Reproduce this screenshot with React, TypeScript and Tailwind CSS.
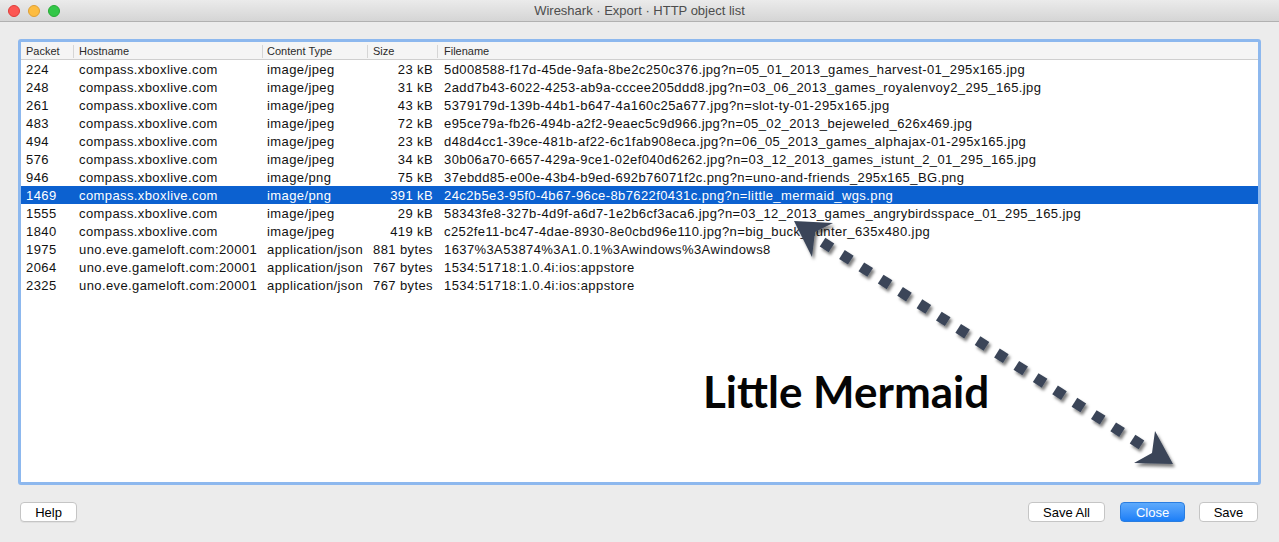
import React from "react";

const rows: [string, string, string, string, string][] = [
  ["224", "compass.xboxlive.com", "image/jpeg", "23 kB", "5d008588-f17d-45de-9afa-8be2c250c376.jpg?n=05_01_2013_games_harvest-01_295x165.jpg"],
  ["248", "compass.xboxlive.com", "image/jpeg", "31 kB", "2add7b43-6022-4253-ab9a-cccee205ddd8.jpg?n=03_06_2013_games_royalenvoy2_295_165.jpg"],
  ["261", "compass.xboxlive.com", "image/jpeg", "43 kB", "5379179d-139b-44b1-b647-4a160c25a677.jpg?n=slot-ty-01-295x165.jpg"],
  ["483", "compass.xboxlive.com", "image/jpeg", "72 kB", "e95ce79a-fb26-494b-a2f2-9eaec5c9d966.jpg?n=05_02_2013_bejeweled_626x469.jpg"],
  ["494", "compass.xboxlive.com", "image/jpeg", "23 kB", "d48d4cc1-39ce-481b-af22-6c1fab908eca.jpg?n=06_05_2013_games_alphajax-01-295x165.jpg"],
  ["576", "compass.xboxlive.com", "image/jpeg", "34 kB", "30b06a70-6657-429a-9ce1-02ef040d6262.jpg?n=03_12_2013_games_istunt_2_01_295_165.jpg"],
  ["946", "compass.xboxlive.com", "image/png", "75 kB", "37ebdd85-e00e-43b4-b9ed-692b76071f2c.png?n=uno-and-friends_295x165_BG.png"],
  ["1469", "compass.xboxlive.com", "image/png", "391 kB", "24c2b5e3-95f0-4b67-96ce-8b7622f0431c.png?n=little_mermaid_wgs.png"],
  ["1555", "compass.xboxlive.com", "image/jpeg", "29 kB", "58343fe8-327b-4d9f-a6d7-1e2b6cf3aca6.jpg?n=03_12_2013_games_angrybirdsspace_01_295_165.jpg"],
  ["1840", "compass.xboxlive.com", "image/jpeg", "419 kB", "c252fe11-bc47-4dae-8930-8e0cbd96e110.jpg?n=big_buck_hunter_635x480.jpg"],
  ["1975", "uno.eve.gameloft.com:20001", "application/json", "881 bytes", "1637%3A53874%3A1.0.1%3Awindows%3Awindows8"],
  ["2064", "uno.eve.gameloft.com:20001", "application/json", "767 bytes", "1534:51718:1.0.4i:ios:appstore"],
  ["2325", "uno.eve.gameloft.com:20001", "application/json", "767 bytes", "1534:51718:1.0.4i:ios:appstore"],
];

function Arrow() {
  const dots = [];
  const n = 17;
  const x0 = 827, y0 = 245, x1 = 1137, y1 = 442;
  const ang = (Math.atan2(y1 - y0, x1 - x0) * 180) / Math.PI;
  for (let i = 0; i < n; i++) {
    const x = x0 + ((x1 - x0) * i) / (n - 1);
    const y = y0 + ((y1 - y0) * i) / (n - 1);
    dots.push(
      <rect key={i} x={-5.25} y={-5.25} width={10.5} height={10.5} transform={`translate(${x} ${y}) rotate(${ang})`} />
    );
  }
  return (
    <svg className="absolute inset-0 pointer-events-none" width={1279} height={542} viewBox="0 0 1279 542">
      <defs>
        <filter id="sh" x="-20%" y="-20%" width="140%" height="140%">
          <feDropShadow dx="2" dy="3" stdDeviation="1.6" floodColor="#000" floodOpacity="0.5" />
        </filter>
      </defs>
      <g fill="#3a4558" filter="url(#sh)">
        {dots}
        <path d="M794 221 L833 223 L815 232 L812 257 Z" />
        <path d="M1173 464 L1134 463 L1152 453 L1155 431 Z" />
      </g>
    </svg>
  );
}

export default function App() {
  const font = { fontFamily: '"Liberation Sans", Arial, sans-serif' };
  return (
    <div className="relative w-[1279px] h-[542px] bg-[#ececec] flex flex-col overflow-hidden" style={font}>
      {/* Title bar */}
      <div className="relative h-[22px] shrink-0 bg-gradient-to-b from-[#ebebeb] to-[#d5d5d5] border-b border-[#b1b1b1] flex items-center justify-center">
        <div className="absolute left-[8px] top-[5px] flex gap-[8px]">
          <div className="w-[12px] h-[12px] rounded-full bg-[#fc5753] border border-[#df3d39]" />
          <div className="w-[12px] h-[12px] rounded-full bg-[#fdbc40] border border-[#de9f34]" />
          <div className="w-[12px] h-[12px] rounded-full bg-[#33c748] border border-[#27aa35]" />
        </div>
        <span className="text-[13px] text-[#4d4d4d]">Wireshark · Export · HTTP object list</span>
      </div>

      {/* Table frame */}
      <div className="mt-[17px] mx-[18px] h-[446px] shrink-0 border-[3px] border-[#8db8ee] rounded-[3px] bg-white flex flex-col overflow-hidden">
        <div className="h-[18px] shrink-0 bg-[#f5f5f5] border-b border-[#cfcfcf] flex items-center pt-[1px] text-[11px] text-[#2b2b2b]">
          <div className="w-[52px] pl-[5px]">Packet</div>
          <div className="w-[189px] pl-[5px] border-l border-[#d6d6d6] h-[13px] leading-[13px]">Hostname</div>
          <div className="w-[105px] pl-[4px] border-l border-[#d6d6d6] h-[13px] leading-[13px]">Content Type</div>
          <div className="w-[70px] pl-[5px] border-l border-[#d6d6d6] h-[13px] leading-[13px]">Size</div>
          <div className="flex-1 pl-[6px] border-l border-[#d6d6d6] h-[13px] leading-[13px]">Filename</div>
        </div>
        {rows.map((r) => {
          const sel = r[0] === "1469";
          return (
            <div
              key={r[0]}
              className={
                "h-[18px] shrink-0 flex items-center pt-[2px] text-[13px] tracking-[0.4px] whitespace-nowrap " +
                (sel ? "bg-[#0c61d0] text-white" : "text-[#111]")
              }
            >
              <div className="w-[52px] pl-[5px]">{r[0]}</div>
              <div className="w-[189px] pl-[6px]">{r[1]}</div>
              <div className="w-[105px] pl-[5px]">{r[2]}</div>
              <div className="w-[70px] pr-[4px] text-right">{r[3]}</div>
              <div className="flex-1 pl-[7px]">{r[4]}</div>
            </div>
          );
        })}
      </div>

      {/* Buttons */}
      <div className="mt-[17px] mx-[20px] mr-[21px] h-[20px] flex items-center text-[13px] text-black">
        <button className="w-[57px] h-[20px] bg-white border border-[#c5c5c5] rounded-[4px] shadow-[0_1px_0_rgba(0,0,0,0.05)]">Help</button>
        <div className="flex-1" />
        <button className="w-[77px] h-[20px] bg-white border border-[#c5c5c5] rounded-[4px]">Save All</button>
        <button className="ml-[15px] w-[65px] h-[20px] rounded-[4px] bg-gradient-to-b from-[#5daafc] to-[#1a7ef7] border border-[#2a7de0] text-white">Close</button>
        <button className="ml-[14px] w-[59px] h-[20px] bg-white border border-[#c5c5c5] rounded-[4px]">Save</button>
      </div>

      <Arrow />
      <div
        className="absolute left-[703px] top-[369px] text-[44px] font-bold text-[#050505] leading-none"
        style={{ fontFamily: 'Lato, "Open Sans", sans-serif' }}
      >
        Little Mermaid
      </div>
    </div>
  );
}
